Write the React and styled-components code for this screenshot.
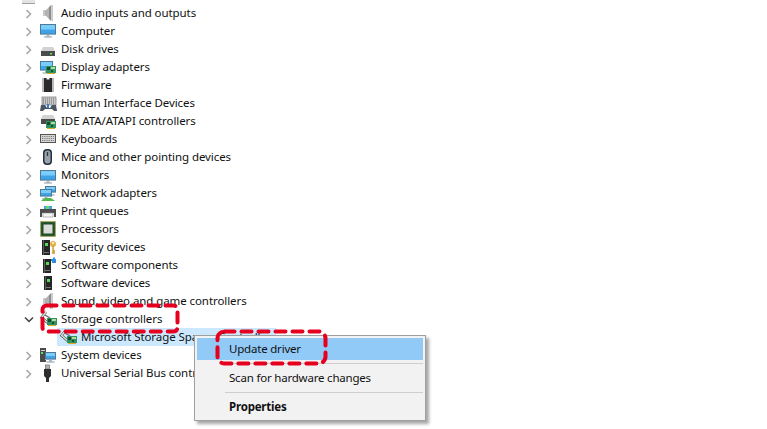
import React from "react";
import styled, { createGlobalStyle } from "styled-components";

const GlobalStyle = createGlobalStyle`
  html, body {
    margin: 0;
    background: #fff;
    overflow: hidden;
  }
`;

const Speaker = () => (
  <>
    <path d="M4 6.500h3L12 1h1.500v16H12L7 11.500H4z" fill="#8d8d8d" />
    <path d="M4 6.500h2.500v5H4z" fill="#c9c9c9" />
    <path d="M7 6.500L10 3.500v11L7 11.500z" fill="#b4b4b4" />
    <path d="M12 1h1.500v16H12z" fill="#d0d0d0" />
  </>
);
const Screen = ({ x = 1, y = 2, w = 16, h = 11 }) => (
  <>
    <rect x={x} y={y} width={w} height={h} fill="#d5e4ee" />
    <rect x={x + 0.5} y={y + 0.5} width={w - 1} height={h - 1.5} fill="#3fa3ea" stroke="#4f7894" strokeWidth="1" />
    <rect x={x + 1} y={y + 1} width={w - 2} height={(h - 2) / 2} fill="#79cdfa" />
    <rect x={x + w / 2 - 1.5} y={y + h} width="3" height="1.500" fill="#a9b6bf" />
    <rect x={x + w / 2 - 4} y={y + h + 1.5} width="8" height="1" fill="#8a98a3" />
  </>
);
const Card = ({ x = 7, y = 8 }) => (
  <>
    <rect x={x} y={y} width="10" height="7" fill="#2f9460" />
    <rect x={x + 1} y={y + 1} width="3" height="3" fill="#124a2b" />
    <rect x={x + 5} y={y + 1} width="4" height="2" fill="#b7d8a0" />
    <rect x={x + 5} y={y + 4} width="2" height="2" fill="#174f30" />
    <rect x={x + 1} y={y + 7} width="8" height="1" fill="#d9a92e" />
  </>
);
const Disk = ({ y = 7 }) => (
  <>
    <path d={`M4 ${y}h10l2 4H2z`} fill="#d2d2d2" />
    <rect x="2" y={y + 4} width="14" height="5" fill="#4b4b4b" />
    <rect x="11" y={y + 6} width="2" height="1.500" fill="#5fe05f" />
  </>
);
const Tower = ({ x = 4, y = 2, h = 14 }) => (
  <>
    <rect x={x} y={y} width="8" height={h} fill="#262626" />
    <rect x={x + 1} y={y} width="1" height={h} fill="#5b5b5b" />
    <rect x={x + 3} y={y + 3} width="3" height="3" fill="#58d858" />
    <rect x={x + 2} y={y + h - 3} width="5" height="1" fill="#777" />
  </>
);
const Sata = () => (
  <>
    <path d="M7 2L2.500 7.500 9 13" fill="none" stroke="#555" strokeWidth="2.600" />
    <path d="M7 2L2.500 7.500 9 13" fill="none" stroke="#e4e4e4" strokeWidth="1.200" />
    <path d="M6 5l5 3" stroke="#6a6a6a" strokeWidth="1.400" />
    <Card x={8} y={8} />
  </>
);

const icons = {
  audio: <Speaker />,
  computer: <Screen />,
  disk: <Disk />,
  display: (
    <>
      <Screen x={1} y={3} w={13} h={10} />
      <Card x={7} y={8} />
    </>
  ),
  firmware: (
    <>
      <path d="M3 3h12M3 5h12M3 7h12M3 9h12M3 11h12M3 13h12M3 15h12" stroke="#777" strokeWidth="1" />
      <rect x="5" y="2" width="8" height="14" fill="#2a2a2a" />
      <path d="M7.500 2h3v1.500h-3z" fill="#eee" />
    </>
  ),
  hid: (
    <>
      <rect x="3" y="3" width="14" height="8" fill="#c8c8c8" stroke="#777" strokeWidth=".7" />
      <path d="M4 5h12M4 7h12M4 9h12" stroke="#6d6d6d" strokeDasharray="1 1" />
      <path d="M1 17l1-6h4l2 3h3l2-3h4l1 6h-3l-2-2H6l-2 2z" fill="#4d5560" />
      <rect x="8" y="10" width="2" height="4" fill="#2f7fd0" />
    </>
  ),
  ide: (
    <>
      <Disk y={3} />
      <Card x={7} y={9} />
    </>
  ),
  keyboard: (
    <>
      <rect x="1.500" y="4.500" width="15" height="8" fill="#d6d6d6" stroke="#555" strokeWidth="1" />
      <path d="M3 6.500h12M3 8.500h12M3 10.500h12" stroke="#7b7b7b" strokeDasharray="1 .8" />
    </>
  ),
  mouse: (
    <>
      <rect x="4" y="1" width="9" height="16" rx="4" fill="#24303d" />
      <rect x="5.500" y="2.500" width="6" height="13" rx="3" fill="#9aa3ac" />
      <rect x="7.800" y="4" width="1.400" height="4" fill="#333" />
    </>
  ),
  monitor: <Screen y={4} />,
  network: (
    <>
      <Screen x={6} y={2} w={11} h={7} />
      <Screen x={1} y={5} w={12} h={8} />
      <path d="M2 17h14l-4-3H6z" fill="#4fb84f" />
    </>
  ),
  print: (
    <>
      <rect x="5" y="4" width="8" height="3" fill="#4aa0e0" />
      <rect x="7" y="4" width="3" height="3" fill="#5fe05f" />
      <path d="M1 7h16v8h-2v-4H3v4H1z" fill="#4d4d4d" />
      <rect x="4" y="11" width="10" height="4" fill="#f5f5f5" stroke="#8a8a8a" strokeWidth=".6" />
    </>
  ),
  processor: (
    <>
      <rect x="1.500" y="1.500" width="15" height="15" fill="#2d6b3c" stroke="#c99a2e" strokeDasharray="1 1" />
      <rect x="2.500" y="2.500" width="13" height="13" fill="#1f4f2c" />
      <rect x="4.500" y="4.500" width="9" height="9" fill="#dcdcdc" />
    </>
  ),
  security: (
    <>
      <Tower x={3} y={2} h={15} />
      <circle cx="14" cy="6" r="3" fill="#e3b341" />
      <circle cx="14" cy="5" r="1" fill="#fff" />
      <path d="M14 8v8M14 13h2M14 15h2" stroke="#c9962a" strokeWidth="1.400" />
    </>
  ),
  components: (
    <>
      <Tower x={4} y={3} h={14} />
      <path d="M12 3h2V1.500h2V3h1v4h-4V5h-1z" fill="#2b8fdc" />
    </>
  ),
  devices: <Tower x={5} y={2} h={14} />,
  storage: <Sata />,
  system: (
    <>
      <rect x="1" y="2" width="6" height="14" fill="#4b4b4b" />
      <rect x="2" y="4" width="4" height="1" fill="#cfcfcf" />
      <rect x="2" y="6" width="2" height="2" fill="#5fe05f" />
      <Screen x={6} y={6} w={11} h={8} />
    </>
  ),
  usb: (
    <>
      <rect x="6.500" y="1" width="4" height="4" fill="#b5b5b5" stroke="#555" strokeWidth=".6" />
      <path d="M5 5h7v7l-2 2v4H7v-4l-2-2z" fill="#2e2e2e" />
    </>
  ),
};

const devices = [
  ["audio", "Audio inputs and outputs"],
  ["computer", "Computer"],
  ["disk", "Disk drives"],
  ["display", "Display adapters"],
  ["firmware", "Firmware"],
  ["hid", "Human Interface Devices"],
  ["ide", "IDE ATA/ATAPI controllers"],
  ["keyboard", "Keyboards"],
  ["mouse", "Mice and other pointing devices"],
  ["monitor", "Monitors"],
  ["network", "Network adapters"],
  ["print", "Print queues"],
  ["processor", "Processors"],
  ["security", "Security devices"],
  ["components", "Software components"],
  ["devices", "Software devices"],
  ["audio", "Sound, video and game controllers"],
];

function Chevron({ open }) {
  return open ? (
    <ChevronSvg viewBox="0 0 12 12">
      <path d="M3 4.500l4 4 4-4" fill="none" stroke="#404040" strokeWidth="1.500" />
    </ChevronSvg>
  ) : (
    <ChevronSvg viewBox="0 0 12 12">
      <path d="M4.500 3l4 4-4 4" fill="none" stroke="#a6a6a6" strokeWidth="1.500" />
    </ChevronSvg>
  );
}

function TreeRow({ icon, label, open }) {
  return (
    <Row>
      <Chevron open={open} />
      <IconSvg viewBox="0 0 18 18">{icons[icon]}</IconSvg>
      <Label>{label}</Label>
    </Row>
  );
}

export default function App() {
  return (
    <Page>
      <GlobalStyle />
      <RootStub />
      {devices.map(([icon, label]) => (
        <TreeRow key={label} icon={icon} label={label} />
      ))}
      <TreeRow icon="storage" label="Storage controllers" open />
      <ChildRow>
        <Selected>
          <IconSvg viewBox="0 0 18 18">{icons.storage}</IconSvg>
          <Label>Microsoft Storage Spaces Controller</Label>
        </Selected>
      </ChildRow>
      <TreeRow icon="system" label="System devices" />
      <TreeRow icon="usb" label="Universal Serial Bus controllers" />

      <Menu>
        <MenuItem $active>Update driver</MenuItem>
        <Separator />
        <MenuItem>Scan for hardware changes</MenuItem>
        <Separator />
        <MenuItem $bold>Properties</MenuItem>
      </Menu>

      <Callout $left={40} $top={303} width="140" height="31">
        <CalloutRect x="2.500" y="2.500" width="135" height="26" rx="4" />
      </Callout>
      <Callout $left={215} $top={329} width="113" height="37">
        <CalloutRect x="2.500" y="2.500" width="108" height="32" rx="7" />
      </Callout>
    </Page>
  );
}

const Page = styled.div`
  position: relative;
  width: 767px;
  height: 429px;
  overflow: hidden;
  background: #fff;
  font-family: "Noto Sans", "Open Sans", sans-serif;
  font-size: 11.5px;
  letter-spacing: -0.08px;
  color: #111;
`;

const RootStub = styled.div`
  width: 13px;
  height: 3px;
  margin-left: 22px;
  background: #e3e3e3;
  border-bottom: 1px solid #a0a0a0;
`;

const Row = styled.div`
  display: flex;
  align-items: center;
  height: 18px;
  padding-left: 22px;
  white-space: nowrap;
`;

const ChildRow = styled(Row)`
  padding-left: 57px;
`;

const Selected = styled.div`
  display: flex;
  align-items: center;
  height: 18px;
  padding: 0 4px 0 2px;
  background: #cce8ff;
`;

const ChevronSvg = styled.svg`
  width: 12px;
  height: 12px;
  margin-right: 5px;
  flex: none;
`;

const IconSvg = styled.svg`
  width: 18px;
  height: 18px;
  flex: none;
`;

const Label = styled.span`
  margin-left: 4px;
  line-height: 18px;
`;

const Menu = styled.div`
  position: absolute;
  left: 194px;
  top: 335px;
  width: 226px;
  padding: 2px;
  background: #f2f2f2;
  border: 1px solid #a0a0a0;
  box-shadow: 3px 3px 3px rgba(0, 0, 0, 0.35);
  letter-spacing: -0.2px;
`;

const MenuItem = styled.div`
  height: 22px;
  line-height: 22px;
  padding-left: 32px;
  font-weight: ${(p) => (p.$bold ? 700 : 400)};
  background: ${(p) => (p.$active ? "#91c9f7" : "transparent")};
`;

const Separator = styled.div`
  height: 1px;
  margin: 3px 0 3px 28px;
  background: #cfcfcf;
`;

const Callout = styled.svg`
  position: absolute;
  left: ${(p) => p.$left}px;
  top: ${(p) => p.$top}px;
`;

const CalloutRect = styled.rect`
  fill: none;
  stroke: #e6001f;
  stroke-width: 4;
  stroke-linecap: round;
  stroke-dasharray: 10 7;
`;
